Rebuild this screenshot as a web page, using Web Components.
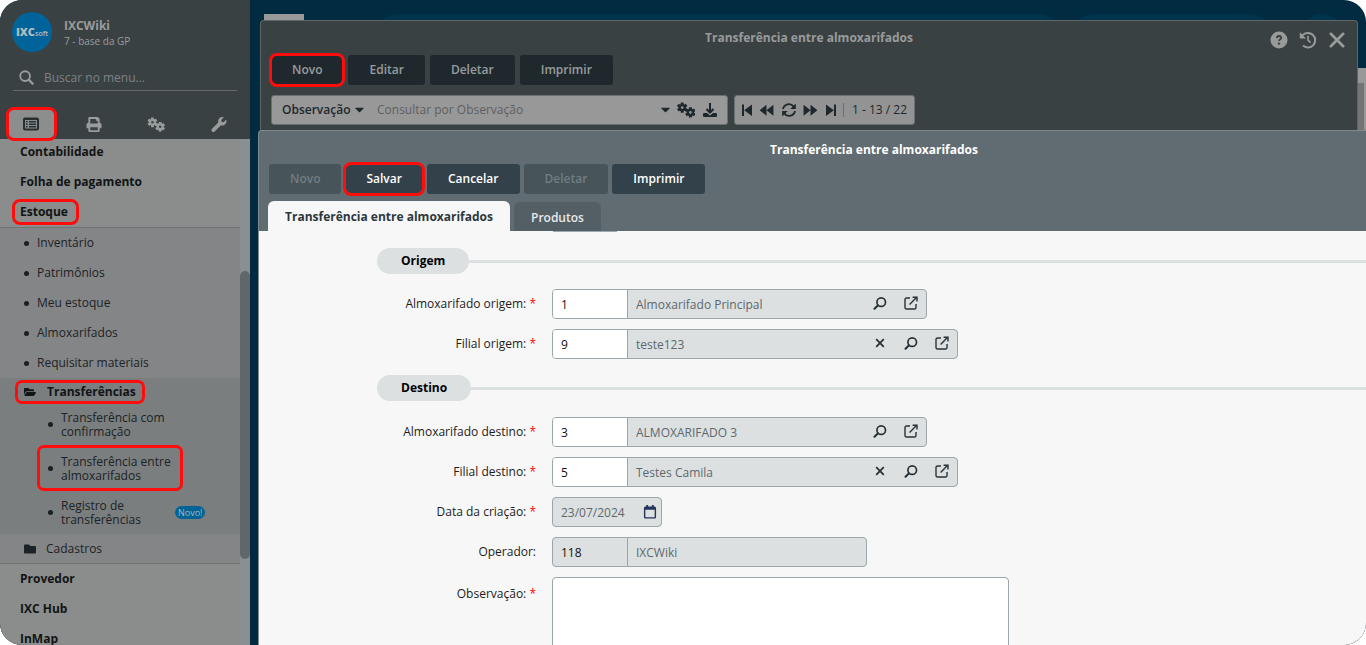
<!DOCTYPE html>
<html lang="pt-BR">
<head>
<meta charset="utf-8">
<title>Transferência entre almoxarifados</title>
<style>
  html, body { margin: 0; height: 100%; background: #fff; }
  body { font: 12px/16px "Open Sans", "Noto Sans", sans-serif; color: #000; }
</style>
</head>
<body>
<ixc-app></ixc-app>
<script>
const define = (name, css, html, setup) => {
  customElements.define(name, class extends HTMLElement {
    connectedCallback() {
      if (this.shadowRoot) return;
      const root = this.attachShadow({ mode: 'open' });
      const markup = typeof html === 'function' ? html(this) : html;
      root.innerHTML = `<style>*{box-sizing:border-box}${css}</style>${markup}`;
      if (setup) setup(this, root);
    }
  });
};

const gear = (x, y, r) => {
  let teeth = '';
  for (let a = 0; a < 360; a += 60) {
    teeth += `<rect x="${x - 1.5}" y="${y - r - 1.6}" width="3" height="3" rx=".5" transform="rotate(${a} ${x} ${y})"/>`;
  }
  return `<circle cx="${x}" cy="${y}" r="${r - 1.1}" fill="none" stroke="currentColor" stroke-width="2.3"/>${teeth}`;
};
const lens = '<circle cx="8.8" cy="6.6" r="4.6" fill="none" stroke="currentColor" stroke-width="1.8"/><path d="M5.4 10 1.6 13.6" fill="none" stroke="currentColor" stroke-width="2.2" stroke-linecap="round"/>';
const ICONS = {
  search: [16, 16, '<circle cx="6.5" cy="6.5" r="5.2" fill="none" stroke="currentColor" stroke-width="2"/><path d="m10.5 10.5 4 4" stroke="currentColor" stroke-width="2.4" stroke-linecap="round"/>'],
  list: [18, 14, '<rect x="1" y="0" width="16" height="13" rx="2"/><path d="M3 2.500h12v8.500H3z" fill="#8b8e8c"/><path d="M4 3.500h1.600V5H4zM7 3.500h7V5H7zM4 6h1.600v1.500H4zM7 6h7v1.500H7zM4 8.500h1.600V10H4zM7 8.500h7V10H7z"/>'],
  print: [512, 512, '<path fill-rule="evenodd" d="M448 192V77.25c0-8.49-3.37-16.62-9.37-22.63L393.37 9.37c-6-6-14.14-9.37-22.63-9.37H96C78.33 0 64 14.33 64 32v160c-35.35 0-64 28.65-64 64v112c0 8.84 7.16 16 16 16h48v96c0 17.67 14.33 32 32 32h320c17.67 0 32-14.33 32-32v-96h48c8.84 0 16-7.16 16-16V256c0-35.35-28.65-64-64-64zm-64 256H128v-96h256v96zm0-224H128V64h192v48c0 8.84 7.16 16 16 16h48v96z"/>'],
  gears: [18, 16, gear(5.2, 5.6, 3.6) + gear(13.4, 10.4, 3.6)],
  wrench: [512, 512, '<path d="M507.73 109.1c-2.24-9.03-13.54-12.09-20.12-5.51l-74.36 74.36-67.88-11.31-11.31-67.88 74.36-74.36c6.62-6.62 3.43-17.9-5.66-20.16-47.38-11.74-99.55.91-136.58 37.93-39.64 39.64-50.55 97.1-34.05 147.2L18.74 402.76c-24.99 24.99-24.99 65.51 0 90.5 24.99 24.99 65.51 24.99 90.5 0l213.21-213.21c50.12 16.71 107.47 5.68 147.37-34.22 37.07-37.07 49.7-89.32 37.91-136.73z"/>'],
  open: [576, 512, '<path d="M572.694 292.093L500.27 416.248A63.997 63.997 0 0 1 444.989 448H45.025c-18.523 0-30.064-20.093-20.731-36.093l72.424-124.155A64 64 0 0 1 152 256h399.964c18.523 0 30.064 20.093 20.73 36.093zM152 224h328v-48c0-26.51-21.49-48-48-48H272l-64-64H48C21.49 64 0 85.49 0 112v278.046l69.077-118.418C86.214 242.25 117.989 224 152 224z"/>'],
  folder: [512, 512, '<path d="M464 128H272l-64-64H48C21.49 64 0 85.49 0 112v288c0 26.51 21.49 48 48 48h416c26.51 0 48-21.49 48-48V176c0-26.51-21.49-48-48-48z"/>'],
  caret: [10, 6, '<path d="M.8.4h8.4q.9 0 .3.8L5.6 5.3q-.6.6-1.2 0L.5 1.2Q-.1.4.8.4z"/>'],
  download: [16, 16, '<path d="M8 1v9M4.5 7 8 10.5 11.5 7" fill="none" stroke="currentColor" stroke-width="2"/><path d="M2.2 11H5l3 2.6 3-2.6h2.8q1.2 0 1.2 1.2v1.6q0 1.2-1.2 1.2H2.2Q1 15 1 13.800v-1.600Q1 11 2.2 11z"/>'],
  first: [12, 12, '<path d="M1 .5h2V12H1zM11 .5V12L3.200 6.200z"/>'],
  rewind: [16, 12, '<path d="M8 .5V12L.6 6.200zM15.400.5V12L8 6.200z"/>'],
  forward: [16, 12, '<path d="M8 .5V12l7.400-5.800zM.6.5V12L8 6.200z"/>'],
  last: [12, 12, '<path d="M9 .5h2V12H9zM1 .5V12l7.800-5.800z"/>'],
  refresh: [16, 16, '<path d="M2 7a6 6 0 0 1 10.600-2.600L14 6M14 9a6 6 0 0 1-10.600 2.600L2 10" fill="none" stroke="currentColor" stroke-width="1.800"/><path d="M14.800 1.500V7H9.300zM1.200 14.500V9h5.500z"/>'],
  help: [18, 18, '<circle cx="9" cy="9" r="8.500"/><path d="M6.800 7.200q.2-2.200 2.300-2.200 2.100.1 2.100 1.900 0 1-1.100 1.600-1.100.6-1.100 1.500" fill="none" stroke="#3a4143" stroke-width="1.800"/><circle cx="9" cy="12.600" r="1.200" fill="#3a4143"/>'],
  history: [18, 18, '<path d="M3.400 4.400A7.300 7.300 0 1 1 4 14.600" fill="none" stroke="currentColor" stroke-width="2"/><path d="M.8 1.200v6.200h6.200z"/><path d="M9 4.800v4.400l2.600 2.400" fill="none" stroke="currentColor" stroke-width="1.600"/>'],
  close: [16, 16, '<path d="m2.500 2.500 11 11m0-11-11 11" stroke="currentColor" stroke-width="2.400" stroke-linecap="round"/>'],
  clear: [10, 10, '<path d="m1.200 1.200 7.600 7.600m0-7.600L1.200 8.800" stroke="currentColor" stroke-width="1.800"/>'],
  lens: [15, 15, lens],
  external: [14, 14, '<path d="M6 2H2.600Q1 2 1 3.600v7.800Q1 13 2.600 13h7.800q1.600 0 1.600-1.600V8M5.600 8.400l6.800-6.800M8.600 1.200H13v4.400" fill="none" stroke="currentColor" stroke-width="1.400"/>'],
  calendar: [14, 15, '<path fill-rule="evenodd" d="M3 0h2v1.500h4V0h2v1.500h.8q1.700 0 1.700 1.700v9.800q0 1.500-1.500 1.500H2Q.5 14.500.5 13V3.200q0-1.700 1.700-1.700H3zM2 5v7.500q0 .6.600.6h8.800q.6 0 .6-.6V5z"/>']
};

define('ui-icon', `
  :host { display: inline-flex; flex: none; width: 16px; height: 16px; }
  svg { width: 100%; height: 100%; fill: currentColor; display: block; }`,
  el => { const [w, h, body] = ICONS[el.getAttribute('name')];
    return `<svg viewBox="0 0 ${w} ${h}" aria-hidden="true">${body}</svg>`; });

/* Toolbar button; "marked" adds the red tutorial frame. */
define('tool-button', `
  :host { display: block; }
  button { display: block; height: 30px; padding: 0 21px; border: 0; border-radius: 3px; font: 600 12px/16px "Open Sans", sans-serif;
    background: var(--button-bg, #33424a); color: var(--button-fg, #fff); }
  button:disabled { background: #47545a; color: #727d82; }
  :host([marked]) button { outline: 3px solid #ff0d0d; outline-offset: -1px; border-radius: 6px; }`,
  el => `<button type="button" ${el.hasAttribute('disabled') ? 'disabled' : ''}><slot></slot></button>`);

define('window-frame', `
  :host { display: flex; flex-direction: column; border: 1px solid var(--frame); border-bottom: 0; border-radius: 4px 4px 0 0; background: var(--bar); color: var(--title); overflow: hidden; }
  header { position: relative; height: var(--head); padding-top: var(--drop, 0px); flex: none; display: flex; justify-content: center; align-items: center; }
  h2 { margin: 0; font: 700 12px/16px "Open Sans", sans-serif; }
  .actions { position: absolute; right: 11px; top: 10px; }
  .tools { display: flex; gap: var(--tool-gap, 4px); padding: 0 10px; flex: none; }`,
  el => `<header><h2>${el.getAttribute('heading')}</h2><div class="actions"><slot name="actions"></slot></div></header>
    <div class="tools"><slot name="tools"></slot></div><slot></slot>`);

define('window-actions', `
  :host { display: flex; gap: 11px; color: #999b9b; }
  button { border: 0; padding: 0; background: none; color: inherit; width: 18px; height: 18px; }
  ui-icon { width: 18px; height: 18px; }`,
  `<button aria-label="Ajuda"><ui-icon name="help"></ui-icon></button>
   <button aria-label="Histórico"><ui-icon name="history"></ui-icon></button>
   <button aria-label="Fechar"><ui-icon name="close"></ui-icon></button>`);

define('record-search', `
  :host { display: flex; gap: 6px; padding: 10px 10px 0; color: #1e272b; }
  .box { display: flex; align-items: center; height: 30px; background: #989898; border: 1px solid #6a6f71; border-radius: 3px; }
  .query { width: 457px; padding: 0 9px 0 10px; }
  .pager { width: 181px; padding: 0 7px 0 6px; background: #939393; justify-content: space-between; }
  select { appearance: none; border: 0; padding: 0; background: none; color: inherit; font: 600 12px/16px "Open Sans", sans-serif; width: 73px; }
  input { flex: 1; min-width: 0; margin-left: 13px; border: 0; padding: 0; background: none; font: 12px/16px "Open Sans", sans-serif; }
  input::placeholder { color: #5d6062; opacity: 1; }
  button { border: 0; padding: 0; background: none; color: inherit; display: flex; }
  .side { display: flex; align-items: center; gap: 7px; }
  .caret { width: 9px; height: 6px; }
  .wide { width: 18px; }
  .step { width: 12px; height: 12px; }
  .jump { width: 15px; height: 12px; }
  .count { border-left: 1px solid #6a6f71; padding-left: 8px; line-height: 14px; }`,
  `<div class="box query">
     <select aria-label="Campo de busca"><option>Observação</option></select><ui-icon class="caret" name="caret"></ui-icon>
     <input aria-label="Consulta" placeholder="Consultar por Observação">
     <div class="side"><button aria-label="Opções"><ui-icon class="caret" name="caret"></ui-icon></button>
     <button aria-label="Configurar"><ui-icon class="wide" name="gears"></ui-icon></button>
     <button aria-label="Exportar"><ui-icon name="download"></ui-icon></button></div>
   </div>
   <div class="box pager">
     <button aria-label="Primeira"><ui-icon class="step" name="first"></ui-icon></button>
     <button aria-label="Anterior"><ui-icon class="jump" name="rewind"></ui-icon></button>
     <button aria-label="Atualizar"><ui-icon name="refresh"></ui-icon></button>
     <button aria-label="Próxima"><ui-icon class="jump" name="forward"></ui-icon></button>
     <button aria-label="Última"><ui-icon class="step" name="last"></ui-icon></button>
     <span class="count">1 - 13 / 22</span>
   </div>`);

define('tab-strip', `
  :host { display: flex; align-items: flex-end; gap: 4px; padding: 7px 9px 0; flex: none; }
  button { height: 29px; padding: 2px 17px 0; border: 0; border-radius: 6px 6px 0 0; background: #535f65; color: #e7eaeb; font: 600 12px/16px "Open Sans", sans-serif; }
  .on { height: 30px; background: #f7f7f7; color: #2c373c; font-weight: 700; }`,
  `<button class="on" role="tab" aria-selected="true">Transferência entre almoxarifados</button><button role="tab" aria-selected="false">Produtos</button>`);

define('form-section', `
  :host { display: flex; align-items: center; height: 26px; margin: 16px 0; }
  h3 { margin: 0; padding: 0 24px; font: 700 12px/26px "Open Sans", sans-serif; background: #dce0e1; border-radius: 13px; color: #000; }
  :host::after { content: ""; flex: 1; height: 3px; background: #dce0e1; }`,
  `<h3><slot></slot></h3>`);

/* Labelled row: kind is "lookup", "date" or "text". */
define('form-field', `
  :host { display: grid; grid-template-columns: 159px 1fr; column-gap: 16px; margin-bottom: 10px; color: #1c1c1c; }
  label { text-align: right; line-height: 30px; }
  :host([kind=text]) label { padding-top: 2px; }
  .req { color: #f00; }
  input, textarea { font: 12px/16px "Open Sans", sans-serif; border: 0; background: none; padding: 2px 8px 0; min-width: 0; outline: 0; color: #111; }
  .box { display: flex; width: 375px; height: 30px; border: 1px solid #9ba5aa; border-radius: 4px; background: #dce0e1; overflow: hidden; color: #263238; }
  .box.clear { width: 406px; }
  .box.plain { width: 315px; }
  .box.date { width: 110px; align-items: center; padding-right: 4px; color: #24345a; }
  .code { width: 75px; border-right: 1px solid #9ba5aa; background: #fff; }
  .plain .code { background: none; }
  .desc { flex: 1; color: #5c686d; }
  button { width: 31px; border: 0; padding: 0 0 3px; background: none; color: inherit; display: flex; align-items: center; justify-content: center; }
  ui-icon { width: 14px; height: 14px; }
  .x { width: 10px; height: 10px; }
  .date button { width: 14px; padding: 0; }
  textarea { width: 457px; height: 110px; border: 1px solid #9ba5aa; border-radius: 4px; background: #fff; resize: none; }`,
  el => {
    const a = n => el.getAttribute(n), kind = a('kind');
    const label = `<label for="f">${a('label')}:${el.hasAttribute('required') ? ' <span class="req">*</span>' : ''}</label>`;
    if (kind === 'text') return label + '<textarea id="f"></textarea>';
    if (kind === 'date') return label + `<div class="box date"><input id="f" class="desc" readonly value="${a('value')}"><button aria-label="Calendário"><ui-icon name="calendar"></ui-icon></button></div>`;
    const plain = el.hasAttribute('plain'), clear = el.hasAttribute('clear');
    return label + `<div class="box ${plain ? 'plain' : ''} ${clear ? 'clear' : ''}"><input id="f" class="code" value="${a('code')}"><input class="desc" aria-label="Descrição" readonly value="${a('value')}">
      ${clear ? '<button aria-label="Limpar"><ui-icon class="x" name="clear"></ui-icon></button>' : ''}
      ${plain ? '' : '<button aria-label="Pesquisar"><ui-icon name="lens"></ui-icon></button><button aria-label="Abrir"><ui-icon name="external"></ui-icon></button>'}</div>`;
  });

define('transfer-form', `
  :host { display: block; flex: 1; min-height: 0; overflow: hidden; background: #f7f7f7; padding-left: 118px; }
  .previous { width: 64px; height: 1px; margin-left: 176px; background: #9aa8b1; }
  .previous + form-section { margin-bottom: 15px; }`,
  `<div class="previous"></div>
   <form-section>Origem</form-section>
   <form-field label="Almoxarifado origem" required code="1" value="Almoxarifado Principal"></form-field>
   <form-field label="Filial origem" required clear code="9" value="teste123"></form-field>
   <form-section>Destino</form-section>
   <form-field label="Almoxarifado destino" required code="3" value="ALMOXARIFADO 3"></form-field>
   <form-field label="Filial destino" required clear code="5" value="Testes Camila"></form-field>
   <form-field kind="date" label="Data da criação" required value="23/07/2024"></form-field>
   <form-field plain label="Operador" code="118" value="IXCWiki"></form-field>
   <form-field kind="text" label="Observação" required></form-field>`);

/* Menu entry: level is "top", "item", "folder" or "leaf". */
define('menu-entry', `
  :host { display: block; }
  a { display: flex; align-items: center; height: 30px; color: #1c2225; text-decoration: none; }
  .top { padding-left: 20px; font-weight: 700; color: #111415; }
  .item { padding-left: 24px; gap: 8px; }
  .folder { height: 29px; padding-left: 24px; }
  .bold { height: 24px; padding-top: 3px; font-weight: 700; color: #111517; }
  .leaf { height: 44px; padding-left: 48px; line-height: 14px; }
  .leaf::before { margin-right: 8px; }
  .item::before, .leaf::before { content: ""; width: 5px; height: 5px; border-radius: 50%; background: #192023; flex: none; }
  .leaf .text { width: 114px; padding-top: 2px; }
  ui-icon { width: 12px; height: 12px; }
  .text, a { border-radius: 6px; }
  :host([marked]) .top .text { margin-left: -6px; padding: 3px 9px 3px 6px; outline: 3px solid #ff0d0d; outline-offset: -1px; }
  .frame { display: flex; align-items: center; gap: 10px; border-radius: 5px; }
  :host([marked]) .frame { gap: 11px; margin-left: -7px; padding: 2px 7px; outline: 3px solid #ff0d0d; outline-offset: -1px; }
  :host([marked]) .leaf { margin: 0 58px 0 38px; padding-left: 10px; outline: 3px solid #ff0d0d; outline-offset: -2px; }
  .badge { padding: 0 3px; border-radius: 7px; background: #006395; color: #a9b6bc; font-size: 9px; line-height: 13px; }`,
  el => {
    const a = n => el.getAttribute(n), level = a('level');
    const bold = el.hasAttribute('expanded') ? 'bold' : '';
    const body = a('icon') ? `<span class="frame"><ui-icon name="${a('icon')}"></ui-icon><span class="text"><slot></slot></span></span>` : '<span class="text"><slot></slot></span>';
    return `<a href="#" class="${level} ${bold}">${body}${a('badge') ? `<span class="badge">${a('badge')}</span>` : ''}</a>`;
  });

define('side-bar', `
  :host { display: flex; flex-direction: column; width: 250px; flex: none; background: #3a4143; color: #999c9d; overflow: hidden; }
  .user { display: flex; gap: 12px; padding: 12px 12px 0; height: 64px; flex: none; }
  .logo { width: 40px; height: 40px; border-radius: 50%; background: #00649a; color: #b4bcbf; display: flex; align-items: center; justify-content: center; font-weight: 800; font-size: 11px; }
  .logo small { font-size: 7px; padding-top: 3px; font-weight: 600; }
  .name { font-weight: 700; padding-top: 6px; }
  .base { font-size: 10px; line-height: 14px; }
  .search { display: flex; align-items: center; gap: 10px; height: 27px; margin: 0 13px; padding-left: 6px; border-bottom: 1px solid #63696c; flex: none; }
  .search ui-icon { width: 15px; height: 15px; }
  input { flex: 1; min-width: 0; border: 0; padding: 2px 0 0; background: none; font: 12px/16px "Open Sans", sans-serif; }
  input::placeholder { color: #7d8284; opacity: 1; }
  .tabs { display: grid; grid-template-columns: repeat(4, 1fr); padding-top: 18px; flex: none; height: 48px; }
  .tabs button { border: 0; padding: 0; background: none; color: inherit; display: flex; align-items: center; justify-content: center; }
  .tabs .on { background: #8b8e8c; color: #262e31; margin: 0 8px; border-radius: 6px; outline: 3px solid #ff0d0d; outline-offset: -1px; z-index: 1; }
  .tabs ui-icon { width: 18px; height: 15px; }
  .body { display: flex; flex: 1; min-height: 0; background: #8a8d8b; color: #1c2225; }
  nav { flex: 1; overflow: hidden; margin-top: -2px; }
  .group { background: #848587; border: solid #6f7374; border-width: 1px 0; }
  .sub { background: #7a7e7f; }
  .track { width: 10px; background: #8a9092; display: flex; flex-direction: column; }
  .track i:nth-child(1) { flex: 132; } .track i:nth-child(3) { flex: 86; }
  .track i:nth-child(2) { flex: 288; background: #60676a; border-radius: 5px; }`,
  `<div class="user"><div class="logo"><span>IXC</span><small>soft</small></div><div><div class="name">IXCWiki</div><div class="base">7 - base da GP</div></div></div>
   <label class="search"><ui-icon name="search"></ui-icon><input aria-label="Buscar no menu" placeholder="Buscar no menu..."></label>
   <div class="tabs"><button class="on" aria-label="Menu"><ui-icon name="list"></ui-icon></button><button aria-label="Imprimir"><ui-icon name="print"></ui-icon></button><button aria-label="Configurações"><ui-icon name="gears"></ui-icon></button><button aria-label="Ferramentas"><ui-icon name="wrench"></ui-icon></button></div>
   <div class="body"><nav>
     <menu-entry level="top">Contabilidade</menu-entry>
     <menu-entry level="top">Folha de pagamento</menu-entry>
     <menu-entry level="top" marked>Estoque</menu-entry>
     <div class="group">
       <menu-entry level="item">Inventário</menu-entry>
       <menu-entry level="item">Patrimônios</menu-entry>
       <menu-entry level="item">Meu estoque</menu-entry>
       <menu-entry level="item">Almoxarifados</menu-entry>
       <menu-entry level="item">Requisitar materiais</menu-entry>
       <div class="sub">
         <menu-entry level="folder" icon="open" expanded marked>Transferências</menu-entry>
         <menu-entry level="leaf">Transferência com confirmação</menu-entry>
         <menu-entry level="leaf" marked>Transferência entre almoxarifados</menu-entry>
         <menu-entry level="leaf" badge="Novo!">Registro de transferências</menu-entry>
       </div>
       <menu-entry level="folder" icon="folder">Cadastros</menu-entry>
     </div>
     <menu-entry level="top">Provedor</menu-entry>
     <menu-entry level="top">IXC Hub</menu-entry>
     <menu-entry level="top">InMap</menu-entry>
   </nav><div class="track"><i></i><i></i><i></i></div></div>`);

define('desk-backdrop', `
  :host { display: flex; flex-direction: column; height: 100%; }
  .bar { display: flex; height: 68px; padding: 14px 23px 0 14px; flex: none; }
  .bar div { height: 42px; border-radius: 21px; background: #00344c; }
  .bar .brand { width: 40px; border-radius: 0; background: #999; }
  .bar .find { flex: 1; margin: 0 12px 0 73px; }
  .bar .menu { width: 199px; margin-right: 30px; }
  .bar .me { width: 42px; }
  .page { flex: 1; display: flex; justify-content: flex-end; }
  .scroll { width: 17px; background: #989898; padding: 15px 2px 0; }
  .scroll div { height: 60%; background: #747474; }`,
  `<div class="bar"><div class="brand"></div><div class="find"></div><div class="menu"></div><div class="me"></div></div><div class="page"><div class="scroll"><div></div></div></div>`);

define('ixc-app', `
  :host { display: flex; height: 100vh; border-radius: 22px; overflow: hidden; background: #002b40; }
  main { flex: 1; min-width: 0; position: relative; overflow: hidden; }
  .back { position: absolute; inset: 20px 8px 0 10px; --head: 34px; --frame: #5f6669; --bar: #3a4143; --title: #999b9b; --button-bg: #1f292d; --button-fg: #989c9d; --tool-gap: 5px; }
  .front { position: absolute; inset: 130px -124px 0 8px; --head: 33px; --drop: 4px; --frame: #7f8a8e; --bar: #606c71; --title: #fff; }`,
  `<side-bar></side-bar>
   <main>
     <desk-backdrop></desk-backdrop>
     <window-frame class="back" heading="Transferência entre almoxarifados">
       <window-actions slot="actions"></window-actions>
       <tool-button slot="tools" marked>Novo</tool-button><tool-button slot="tools">Editar</tool-button><tool-button slot="tools">Deletar</tool-button><tool-button slot="tools">Imprimir</tool-button>
       <record-search></record-search>
     </window-frame>
     <window-frame class="front" heading="Transferência entre almoxarifados">
       <tool-button slot="tools" disabled>Novo</tool-button><tool-button slot="tools" marked>Salvar</tool-button><tool-button slot="tools">Cancelar</tool-button><tool-button slot="tools" disabled>Deletar</tool-button><tool-button slot="tools">Imprimir</tool-button>
       <tab-strip></tab-strip>
       <transfer-form></transfer-form>
     </window-frame>
   </main>`);
</script>
</body>
</html>
